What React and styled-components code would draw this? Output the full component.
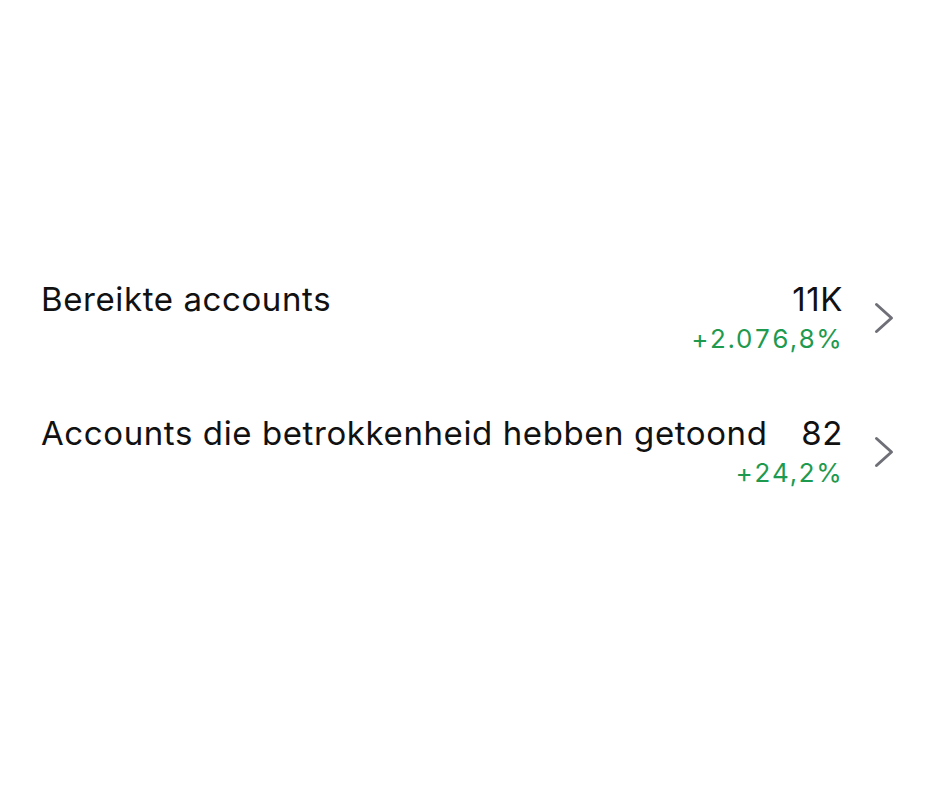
import React from "react";
import styled, { createGlobalStyle } from "styled-components";

const Global = createGlobalStyle`
  html, body { margin: 0; padding: 0; background: #fff; }
  body { font-family: Inter, "Noto Sans", "Liberation Sans", sans-serif; -webkit-font-smoothing: antialiased; }
`;

const Page = styled.div`
  width: 940px;
  height: 788px;
  background: #fff;
  box-sizing: border-box;
  padding: 282px 46px 0 41px;
`;

const List = styled.div`
  display: flex;
  flex-direction: column;
  gap: 62px;
`;

const Row = styled.div`
  display: flex;
  align-items: center;
  gap: 31px;
`;

const Main = styled.div`
  flex: 1;
  min-width: 0;
  display: grid;
  grid-template-columns: 1fr auto;
  column-gap: 16px;
  row-gap: 8px;
`;

const Label = styled.div`
  font-size: 33px;
  line-height: 34px;
  color: #111;
  letter-spacing: 0.6px;
  white-space: nowrap;
`;

const Value = styled.div`
  font-size: 33px;
  line-height: 34px;
  color: #111;
  letter-spacing: 0.6px;
  text-align: right;
`;

const Delta = styled.div`
  grid-column: 1 / -1;
  justify-self: end;
  font-size: 26px;
  line-height: 30px;
  color: #1e9a4f;
  letter-spacing: 1.2px;
  font-variant-numeric: tabular-nums;
`;

const Chevron = styled.svg`
  width: 20px;
  height: 32px;
  flex: none;
`;

const rows = [
  { label: "Bereikte accounts", value: "11K", delta: "+2.076,8%" },
  { label: "Accounts die betrokkenheid hebben getoond", value: "82", delta: "+24,2%" },
];

export default function App() {
  return (
    <Page>
      <Global />
      <List>
        {rows.map((r) => (
          <Row key={r.label}>
            <Main>
              <Label>{r.label}</Label>
              <Value>{r.value}</Value>
              <Delta>{r.delta}</Delta>
            </Main>
            <Chevron viewBox="0 0 20 32" fill="none">
              <path d="M2.5 2.5 L17.5 16 L2.5 29.5" stroke="#6f6f78" strokeWidth="3" strokeLinecap="round" strokeLinejoin="round" />
            </Chevron>
          </Row>
        ))}
      </List>
    </Page>
  );
}
